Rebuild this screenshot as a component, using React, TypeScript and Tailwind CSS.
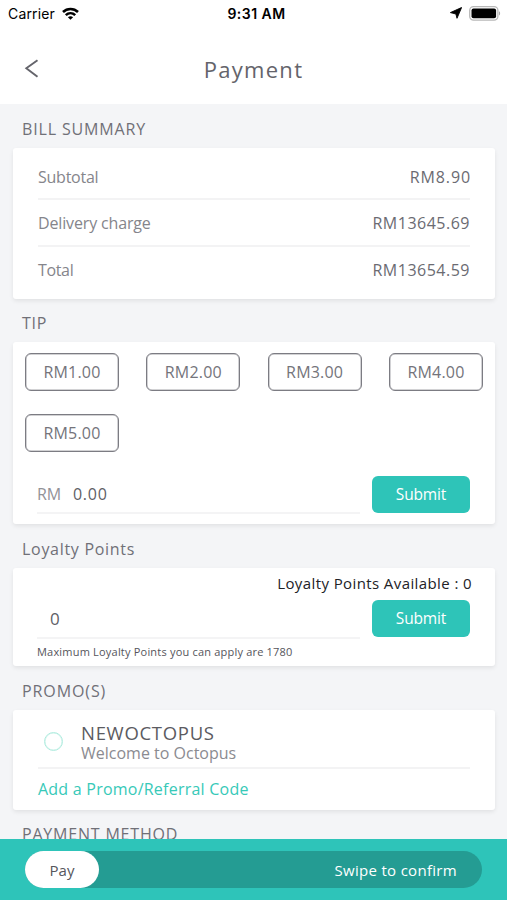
import type { ReactNode } from "react";

const tips = ["RM1.00", "RM2.00", "RM3.00", "RM4.00", "RM5.00"];

function StatusBar() {
  return (
    <div className="grid h-7 grid-cols-3 items-center pr-1.5 pl-2 font-['Inter',sans-serif] text-black">
      <div className="flex items-center gap-[7px]">
        <span className="text-[14px] leading-7 tracking-[0.15px]">Carrier</span>
        <svg width="17" height="13" viewBox="0 0 17 13" className="-mt-0.5" fill="none" stroke="#000" strokeWidth="2.6">
          <path d="M1 5C5.2 1 11.8 1 16 5" />
          <path d="M3.800 8.100c2.700-2.500 6.700-2.500 9.400 0" />
          <path d="M8.500 12.800 5.900 10.200c1.500-1.300 3.700-1.300 5.200 0z" fill="#000" stroke="none" />
        </svg>
      </div>
      <span className="pl-1 text-center text-[14px] font-semibold leading-7 tracking-[0.45px]">9:31 AM</span>
      <div className="-mt-0.5 flex items-center justify-end gap-[7px]">
        <svg width="12" height="12" viewBox="0 0 12 12">
          <path d="M11.600.5 7 11.300 5.900 7 .4 5.600z" fill="#000" stroke="#000" strokeWidth=".9" strokeLinejoin="round" />
        </svg>
        <svg width="32" height="15" viewBox="0 0 32 15">
          <rect x=".7" y=".7" width="28.200" height="13.400" rx="3.800" fill="#fff" stroke="#b8b8b8" strokeWidth="1.300" />
          <rect x="2.500" y="2.600" width="24.600" height="9.600" rx="2" fill="#000" />
          <path d="M30 5.300c1.500.6 1.500 3.600 0 4.200z" fill="#aaa" />
        </svg>
      </div>
    </div>
  );
}

function Label({ children, className = "" }: { children: ReactNode; className?: string }) {
  return <h2 className={`flex shrink-0 items-center pl-[22px] text-[16px] text-[#707077] ${className}`}>{children}</h2>;
}

function Card({ children, className = "" }: { children: ReactNode; className?: string }) {
  return (
    <section className={`mr-3 ml-[13px] shrink-0 rounded-[3px] bg-white shadow-[0_2px_4px_rgba(0,0,0,0.08)] ${className}`}>
      {children}
    </section>
  );
}

function BillRow({ name, amount, className = "", nameClass = "", amountClass = "" }: {
  name: string; amount: string; className?: string; nameClass?: string; amountClass?: string;
}) {
  return (
    <div className={`flex items-center justify-between border-[#f3f3f4] text-[16px] ${className}`}>
      <span className={`text-[#85858b] ${nameClass}`}>{name}</span>
      <span className={`text-[#6b6b72] ${amountClass}`}>{amount}</span>
    </div>
  );
}

function Submit() {
  return (
    <button className="h-[37px] w-[98px] rounded-[6px] bg-[#2ec4b8] text-[15.5px] tracking-[-0.15px] text-white">
      Submit
    </button>
  );
}

export default function App() {
  return (
    <main className="flex h-[900px] w-[507px] flex-col overflow-hidden bg-[#f4f5f7] font-['Open_Sans','Noto_Sans',sans-serif] font-normal whitespace-nowrap">
      <header className="h-[104px] shrink-0 bg-white">
        <StatusBar />
        <div className="grid h-[82px] grid-cols-[60px_1fr_60px] items-center">
          <svg className="ml-6" width="16" height="20" viewBox="0 0 16 20" fill="none" stroke="#64646b" strokeWidth="1.900">
            <path d="M13.500 1.200 2.300 9.300 13.500 17.800" />
          </svg>
          <h1 className="text-center text-[22px] tracking-[1.300px] text-[#64646b]">Payment</h1>
        </div>
      </header>

      <Label className="h-[44px] pt-1.5 tracking-[0.850px]">BILL SUMMARY</Label>
      <Card className="h-[151px] pr-[25px] pl-[25px] pt-[5px]">
        <BillRow name="Subtotal" amount="RM8.90" className="h-[47px] border-b-2 pt-0.5" nameClass="tracking-[-0.250px]" amountClass="tracking-[0.900px] -mr-px" />
        <BillRow name="Delivery charge" amount="RM13645.69" className="h-[47px] border-b-2" nameClass="tracking-[-0.150px]" amountClass="tracking-[0.500px]" />
        <BillRow name="Total" amount="RM13654.59" className="h-[45px]" nameClass="tracking-[-0.350px]" amountClass="tracking-[0.500px]" />
      </Card>

      <Label className="h-[43px] pt-1 tracking-[0.700px]">TIP</Label>
      <Card className="h-[182px] pt-[11px]">
        <div className="grid grid-cols-[repeat(4,94px)] justify-between gap-y-[23px] px-3">
          {tips.map((tip) => (
            <button key={tip} className="h-[38px] rounded-[6px] border border-[#7c7c83] text-[16px] tracking-[0.200px] text-[#74747b] shadow-[inset_0_0_0_0.5px_#a5a5aa]">
              {tip}
            </button>
          ))}
        </div>
        <div className="mt-6 flex justify-between pr-[25px] pl-6">
          <div className="flex h-[38px] w-[323px] items-center gap-3 border-b-2 border-[#f4f4f5] text-[16px]">
            <span className="tracking-[-0.200px] text-[#929298]">RM</span>
            <span className="tracking-[0.800px] text-[#606066]">0.00</span>
          </div>
          <Submit />
        </div>
      </Card>

      <Label className="h-[44px] pt-1.5 tracking-[0.700px]">Loyalty Points</Label>
      <Card className="h-[98px] pr-[25px] pl-6">
        <p className="-mr-0.5 flex h-[31px] items-center justify-end text-[15px] tracking-[0.400px] text-[#222227]">Loyalty Points Available : 0</p>
        <div className="mt-px flex justify-between">
          <div className="flex h-[39px] w-[323px] items-center border-b-2 border-[#f4f4f5] pl-[13px] text-[17px] text-[#606066]">0</div>
          <Submit />
        </div>
        <p className="pt-1 text-[11px] leading-[17px] tracking-[0.200px] text-[#55555b]">Maximum Loyalty Points you can apply are 1780</p>
      </Card>

      <Label className="h-[44px] pt-1.5 tracking-[0.900px]">PROMO(S)</Label>
      <Card className="h-[100px] px-[25px]">
        <div className="flex h-[59px] items-center gap-[18px] border-b-2 border-[#f3f3f4] pt-2 pl-1.5">
          <span className="-mt-0.5 size-[19px] rounded-full border border-[#b0ecdf] shadow-[inset_0_0_0_0.5px_#c8f2e8]" />
          <div>
            <h3 className="text-[18.5px] leading-[20px] tracking-[0.700px] text-[#5b5b61]">NEWOCTOPUS</h3>
            <p className="text-[16px] leading-[20px] text-[#8b8b91]">Welcome to Octopus</p>
          </div>
        </div>
        <p className="text-[16px] leading-[40px] tracking-[0.230px] text-[#37c9b8]">Add a Promo/Referral Code</p>
      </Card>

      <div className="h-[29px] shrink-0 overflow-hidden">
        <Label className="h-[48px] tracking-[0.800px]">PAYMENT METHOD</Label>
      </div>
      <footer className="h-[61px] shrink-0 bg-[#2ec4b9] px-[25px] pt-3">
        <div className="flex h-[37px] items-center justify-between rounded-full bg-[#249c93] pr-[25px]">
          <button className="h-[37px] w-[74px] rounded-full bg-white pt-px text-[15px] text-[#56565c]">Pay</button>
          <span className="pt-px text-[15px] font-medium tracking-[0.300px] text-white">Swipe to confirm</span>
        </div>
      </footer>
    </main>
  );
}
